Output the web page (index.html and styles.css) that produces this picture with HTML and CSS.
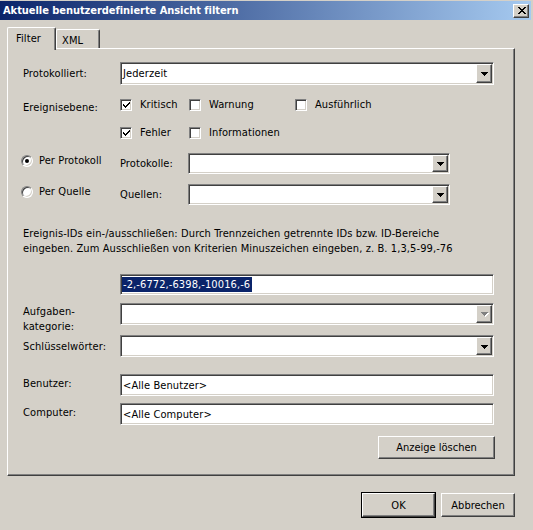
FILE: index.html
```html
<!DOCTYPE html>
<html lang="de">
<head>
<meta charset="utf-8">
<title>Aktuelle benutzerdefinierte Ansicht filtern</title>
<link rel="stylesheet" href="styles.css">
</head>
<body>
<div class="window">
  <div class="titlebar">
    <span class="title">Aktuelle benutzerdefinierte Ansicht filtern</span>
    <span class="close raised"><svg width="8" height="7" viewBox="0 0 8 7"><path d="M0 0h2v1h1v1h2V1h1V0h2v1H7v1H6v1H5v1h1v1h1v1h1v1H6V6H5V5H3v1H2v1H0V6h1V5h1V4h1V3H2V2H1V1H0z" fill="#000"/></svg></span>
  </div>

  <div class="tabs">
    <div class="tab active">Filter</div>
    <div class="tab">XML</div>
  </div>

  <div class="panel">
    <div class="row r1">
      <span class="lbl">Protokolliert:</span>
      <div class="combo sunken w-full">
        <span class="val">Jederzeit</span>
        <span class="cbtn raised"><svg width="7" height="4" viewBox="0 0 7 4"><path d="M0 0h7v1H0zM1 1h5v1H1zM2 2h3v1H2zM3 3h1v1H3z" fill="#000"/></svg></span>
      </div>
    </div>

    <div class="row r2">
      <span class="lbl lbl-up">Ereignisebene:</span>
      <span class="cb w1"><span class="box sunken"><svg width="8" height="8" viewBox="0 0 8 8"><path d="M1 3h1v1h1v1h1V4h1V3h1V2h1V1h1v2H7v1H6v1H5v1H4v1H3V6H2V5H1z" fill="#000"/></svg></span>Kritisch</span>
      <span class="cb w2"><span class="box sunken"></span>Warnung</span>
      <span class="cb"><span class="box sunken"></span>Ausführlich</span>
    </div>

    <div class="row r3">
      <span class="lbl"></span>
      <span class="cb w1"><span class="box sunken"><svg width="8" height="8" viewBox="0 0 8 8"><path d="M1 3h1v1h1v1h1V4h1V3h1V2h1V1h1v2H7v1H6v1H5v1H4v1H3V6H2V5H1z" fill="#000"/></svg></span>Fehler</span>
      <span class="cb"><span class="box sunken"></span>Informationen</span>
    </div>

    <div class="row r4">
      <span class="radio-opt"><span class="radio on"></span>Per Protokoll</span>
      <span class="lbl2">Protokolle:</span>
      <div class="combo sunken w-mid">
        <span class="val"></span>
        <span class="cbtn raised"><svg width="7" height="4" viewBox="0 0 7 4"><path d="M0 0h7v1H0zM1 1h5v1H1zM2 2h3v1H2zM3 3h1v1H3z" fill="#000"/></svg></span>
      </div>
    </div>

    <div class="row r5">
      <span class="radio-opt"><span class="radio"></span>Per Quelle</span>
      <span class="lbl2">Quellen:</span>
      <div class="combo sunken w-mid">
        <span class="val"></span>
        <span class="cbtn raised"><svg width="7" height="4" viewBox="0 0 7 4"><path d="M0 0h7v1H0zM1 1h5v1H1zM2 2h3v1H2zM3 3h1v1H3z" fill="#000"/></svg></span>
      </div>
    </div>

    <p class="desc">Ereignis-IDs ein-/ausschließen: Durch Trennzeichen getrennte IDs bzw. ID-Bereiche eingeben. Zum Ausschließen von Kriterien Minuszeichen eingeben, z. B. 1,3,5-99,-76</p>

    <div class="row r-id">
      <span class="lbl"></span>
      <div class="edit sunken w-full"><span class="sel">-2,-6772,-6398,-10016,-6</span></div>
    </div>

    <div class="row r-cat">
      <span class="lbl lbl-two">Aufgaben-<br>kategorie:</span>
      <div class="combo sunken w-full">
        <span class="val"></span>
        <span class="cbtn raised"><svg width="8" height="5" viewBox="0 0 8 5"><path d="M1 1h7v1H1zM2 2h5v1H2zM3 3h3v1H3zM4 4h1v1H4z" fill="#fff"/><path d="M0 0h7v1H0zM1 1h5v1H1zM2 2h3v1H2zM3 3h1v1H3z" fill="#808080"/></svg></span>
      </div>
    </div>

    <div class="row r-key">
      <span class="lbl">Schlüsselwörter:</span>
      <div class="combo sunken w-full">
        <span class="val"></span>
        <span class="cbtn raised"><svg width="7" height="4" viewBox="0 0 7 4"><path d="M0 0h7v1H0zM1 1h5v1H1zM2 2h3v1H2zM3 3h1v1H3z" fill="#000"/></svg></span>
      </div>
    </div>

    <div class="row r-user">
      <span class="lbl lbl-up">Benutzer:</span>
      <div class="edit sunken w-full"><span class="txt">&lt;Alle Benutzer&gt;</span></div>
    </div>

    <div class="row r-comp">
      <span class="lbl lbl-up">Computer:</span>
      <div class="edit sunken w-full"><span class="txt">&lt;Alle Computer&gt;</span></div>
    </div>

    <div class="row r-clear">
      <button class="pbtn raised clear">Anzeige löschen</button>
    </div>
  </div>

  <div class="footer">
    <button class="pbtn raised default">OK</button>
    <button class="pbtn raised cancel">Abbrechen</button>
  </div>
</div>
</body>
</html>
```

FILE: styles.css
```css
* { box-sizing: border-box; }

html, body {
  margin: 0;
  padding: 0;
}

body {
  width: 533px;
  height: 530px;
  overflow: hidden;
  background: #d4d0c8;
  font-family: "DejaVu Sans Condensed", "DejaVu Sans", sans-serif;
  font-stretch: condensed;
  font-size: 11px;
  letter-spacing: 0.1px;
  color: #000;
}

.window {
  width: 533px;
  height: 530px;
  padding-top: 1px;
}

/* 3D borders */
.sunken {
  border: 1px solid;
  border-color: #808080 #ffffff #ffffff #808080;
  box-shadow: inset 1px 1px 0 #404040, inset -1px -1px 0 #d4d0c8;
  background: #fff;
}

.raised {
  border: 1px solid;
  border-color: #ffffff #404040 #404040 #ffffff;
  box-shadow: inset -1px -1px 0 #808080, inset 1px 1px 0 #d4d0c8;
  background: #d4d0c8;
}

/* title bar */
.titlebar {
  height: 19px;
  width: 531px;
  background: linear-gradient(to right, #0a246a 0%, #a6caf0 100%);
  display: flex;
  align-items: center;
  justify-content: space-between;
  padding: 0 2px 0 3px;
}

.title {
  color: #fff;
  font-weight: bold;
  font-size: 11px;
  line-height: 19px;
  letter-spacing: -0.05px;
}

.close {
  width: 16px;
  height: 14px;
  display: flex;
  align-items: center;
  justify-content: center;
  padding-left: 1px;
}

/* tabs */
.tabs {
  display: flex;
  align-items: flex-end;
  margin: 7px 0 0 7px;
  height: 21px;
  position: relative;
  z-index: 2;
}

.tab {
  height: 19px;
  width: 44px;
  border: 1px solid;
  border-bottom: none;
  border-color: #fff #404040 #404040 #fff;
  box-shadow: inset -1px 0 0 #808080;
  border-radius: 2px 2px 0 0;
  padding: 4px 0 0 5px;
  background: #d4d0c8;
}

.tab.active {
  width: 49px;
  height: 23px;
  margin-bottom: -2px;
  padding: 4px 0 0 8px;
}

/* panel */
.panel {
  margin-left: 7px;
  width: 508px;
  height: 428px;
  border: 1px solid;
  border-color: #fff #404040 #404040 #fff;
  box-shadow: inset -1px -1px 0 #808080;
  padding: 13px 19px 0 15px;
  position: relative;
  z-index: 1;
}

.row {
  display: flex;
  align-items: center;
}

.lbl {
  width: 97px;
  flex: none;
}

.lbl-up { align-self: flex-start; padding-top: 3px; }

.combo, .edit {
  display: flex;
  align-items: stretch;
  height: 23px;
}

.w-full { width: 374px; }
.w-mid { width: 262px; height: 21px; }

.val, .txt {
  flex: 1;
  padding: 0 0 0 2px;
  display: flex;
  align-items: center;
}

.cbtn {
  width: 16px;
  margin: 1px 1px 1px 0;
  display: flex;
  align-items: center;
  justify-content: center;
  padding: 1px 0 0 1px;
}

/* checkboxes */
.cb {
  display: flex;
  align-items: center;
  flex: none;
}

.w1 { width: 69px; }
.w2 { width: 106px; }

.box {
  width: 12px;
  height: 12px;
  margin-right: 8px;
  display: flex;
  align-items: center;
  justify-content: center;
  padding: 1px 0 0 0;
}

.r1 { height: 23px; }
.r2 { height: 13px; margin-top: 13px; }
.r3 { height: 13px; margin-top: 15px; }
.r4 { height: 21px; margin-top: 14px; align-items: flex-start; }
.r5 { height: 21px; margin-top: 10px; align-items: flex-start; }

/* radios */
.radio-opt {
  width: 99px;
  margin-left: -2px;
  display: flex;
  align-items: center;
  flex: none;
  padding-top: 1px;
}

.radio {
  width: 12px;
  height: 12px;
  border-radius: 50%;
  border: 1px solid;
  border-color: #808080 #fff #fff #808080;
  box-shadow: inset 1px 1px 0 #404040, inset -1px -1px 0 #d4d0c8;
  background: #fff;
  margin-right: 6px;
  display: flex;
  align-items: center;
  justify-content: center;
}

.radio.on::after {
  content: "";
  width: 4px;
  height: 4px;
  background: #000;
  border-radius: 50%;
}

.lbl2 {
  width: 68px;
  flex: none;
  padding-top: 4px;
}

/* description */
.desc {
  margin: 21px 0 0 0;
  line-height: 15px;
  width: 440px;
}

.r-id { margin-top: 18px; }
.r-id .edit { height: 21px; padding: 2px 0 2px 1px; }

.sel {
  background: #0a246a;
  color: #fff;
  padding: 0 2px 0 1px;
  display: flex;
  align-items: center;
}

.r-cat { margin-top: 8px; align-items: flex-start; height: 22px; }
.r-cat .combo { height: 22px; }
.lbl-two { line-height: 15px; padding-top: 1px; }

.r-key { margin-top: 10px; }
.r-key .combo { height: 22px; }

.r-user { margin-top: 17px; }
.r-comp { margin-top: 7px; }
.r-user .edit, .r-comp .edit { height: 22px; }

.r-clear { margin-top: 11px; justify-content: flex-end; }

/* push buttons */
.pbtn {
  font: inherit;
  color: #000;
  height: 23px;
  padding: 0;
  margin: 0;
}

.clear { width: 117px; }

.footer {
  display: flex;
  justify-content: flex-end;
  gap: 6px;
  margin-top: 17px;
  padding-right: 18px;
}

.footer .pbtn { height: 24px; }

.default {
  width: 73px;
  outline: 1px solid #000;
  outline-offset: 0;
  border-color: #fff #404040 #404040 #fff;
}

.cancel { width: 74px; }
```
